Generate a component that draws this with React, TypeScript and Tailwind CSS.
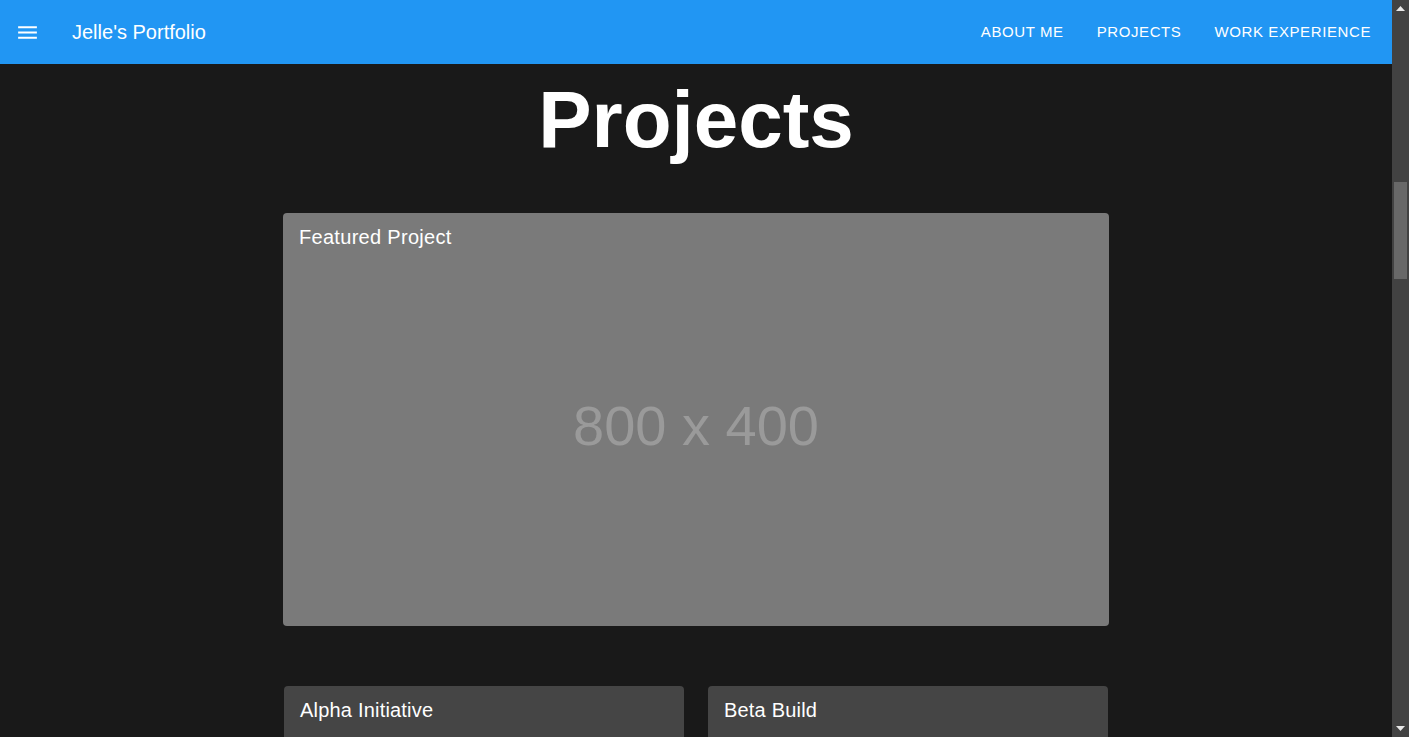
import React from "react";

const font = { fontFamily: '"Liberation Sans", Arial, sans-serif' };

function MenuIcon() {
  return (
    <svg width="25" height="25" viewBox="0 0 24 24" fill="white" aria-hidden="true">
      <path d="M3 18h18v-2H3v2zm0-5h18v-2H3v2zm0-7v2h18V6H3z" />
    </svg>
  );
}

export default function App() {
  return (
    <div
      className="flex h-[737px] w-full overflow-hidden bg-[#191919] text-white"
      style={font}
    >
      <div className="flex min-w-0 flex-1 flex-col">
        <header className="flex h-16 shrink-0 items-center bg-[#2196f3] pl-[15px] pr-[21px]">
          <MenuIcon />
          <div className="ml-[32px] text-[20px] leading-6">Jelle's Portfolio</div>
          <nav className="ml-auto flex items-center gap-[33px] text-[15px] uppercase tracking-[0.6px] leading-6">
            <span>About me</span>
            <span>Projects</span>
            <span>Work experience</span>
          </nav>
        </header>

        <main className="flex flex-col items-center">
          <h1 className="mt-4 text-[80px] font-bold leading-none">Projects</h1>

          <div className="relative mt-[53px] flex h-[413px] w-[826px] items-center justify-center rounded bg-[#7a7a7a] pt-3">
            <div className="absolute left-4 top-3 text-[20px] leading-6 tracking-[0.3px]">
              Featured Project
            </div>
            <span className="text-[56px] leading-none text-[#9a9a9a]">800 x 400</span>
          </div>

          <div className="mt-[60px] flex gap-6">
            <div className="h-[200px] w-[400px] rounded bg-[#454545] px-4 pt-3">
              <div className="text-[20px] leading-6 tracking-[0.2px]">Alpha Initiative</div>
            </div>
            <div className="h-[200px] w-[400px] rounded bg-[#454545] px-4 pt-3">
              <div className="text-[20px] leading-6 tracking-[0.2px]">Beta Build</div>
            </div>
          </div>
        </main>
      </div>

      <div className="flex w-[17px] shrink-0 flex-col items-center bg-[#424242]">
        <div className="flex h-[17px] items-center justify-center">
          <svg width="9" height="5" viewBox="0 0 9 5" aria-hidden="true">
            <path d="M0 5 L4.5 0 L9 5 Z" fill="#e6e6e6" />
          </svg>
        </div>
        <div className="mt-[165px] h-[97px] w-[13px] bg-[#686868]" />
        <div className="mt-auto flex h-[17px] items-center justify-center">
          <svg width="9" height="5" viewBox="0 0 9 5" aria-hidden="true">
            <path d="M0 0 L9 0 L4.5 5 Z" fill="#e6e6e6" />
          </svg>
        </div>
      </div>
    </div>
  );
}
